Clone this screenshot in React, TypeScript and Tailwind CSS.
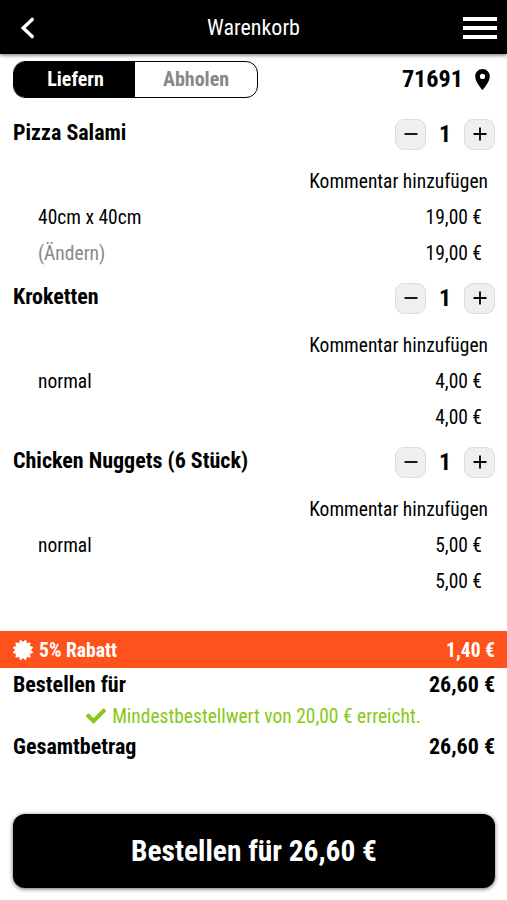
import { FaCheck, FaCertificate } from "react-icons/fa";
import { MdLocationOn } from "react-icons/md";

type CartItem = {
  name: string;
  option: string;
  editable?: boolean;
  price: string;
};

const items: CartItem[] = [
  { name: "Pizza Salami", option: "40cm x 40cm", editable: true, price: "19,00 €" },
  { name: "Kroketten", option: "normal", price: "4,00 €" },
  { name: "Chicken Nuggets (6 Stück)", option: "normal", price: "5,00 €" },
];

function Stepper() {
  return (
    <div className="flex items-center">
      <button className="flex size-[31px] items-center justify-center rounded-[9px] border border-[#dcdcdc] bg-[#efefef]">
        <svg width="14" height="14" viewBox="0 0 14 14" stroke="#000" strokeWidth="1.8">
          <path d="M0.5 7H13.5" />
        </svg>
      </button>
      <span className="w-[38px] text-center text-[24px] font-bold">1</span>
      <button className="flex size-[31px] items-center justify-center rounded-[9px] border border-[#dcdcdc] bg-[#efefef]">
        <svg width="14" height="14" viewBox="0 0 14 14" stroke="#000" strokeWidth="1.8">
          <path d="M0.5 7H13.5M7 0.5V13.5" />
        </svg>
      </button>
    </div>
  );
}

function Item({ item }: { item: CartItem }) {
  return (
    <div className="text-[19.5px]">
      <div className="mb-0.5 flex h-[54px] items-center justify-between pr-3 pl-[13px]">
        <h2 className="pb-[3px] text-[22px] font-bold">{item.name}</h2>
        <Stepper />
      </div>
      <div className="flex h-9 items-center justify-end pt-0.5 pr-[19px]">Kommentar hinzufügen</div>
      <div className="flex h-9 items-center justify-between pt-0.5 pr-[25px] pl-[38px]">
        <span>{item.option}</span>
        <span>{item.price}</span>
      </div>
      <div className="flex h-9 items-center justify-between pt-0.5 pr-[25px] pl-[38px]">
        <span className="text-[#888]">{item.editable && "(Ändern)"}</span>
        <span>{item.price}</span>
      </div>
    </div>
  );
}

export default function App() {
  return (
    <div className="flex h-[900px] w-[507px] flex-col overflow-hidden bg-white font-['Roboto_Condensed',Roboto,sans-serif] leading-none font-[440] text-black [font-stretch:75%]">
      <header className="grid h-[54px] shrink-0 grid-cols-[1fr_auto_1fr] items-center bg-black px-[10px] text-white shadow-[0_1px_4px_rgba(0,0,0,0.6)]">
        <svg className="mt-0.5 ml-[10px]" width="15" height="22" viewBox="0 0 15 22" fill="none" stroke="#fff" strokeWidth="3.4" strokeLinecap="round">
          <path d="M12.2 2.4L3.2 11L12.2 19.6" />
        </svg>
        <h1 className="pt-0.5 text-[22px]">Warenkorb</h1>
        <svg className="mt-0.5 justify-self-end" width="34" height="24" viewBox="0 0 34 24" fill="#fff">
          <path d="M0 1h34v4H0zM0 10h34v4H0zM0 19h34v4H0z" />
        </svg>
      </header>

      <div className="flex h-[53px] shrink-0 items-start justify-between pt-[7px] pr-3 pl-[13px]">
        <div className="flex h-[37px] w-[245px] overflow-hidden rounded-[12px] border border-black text-[20px] font-bold">
          <button className="w-[121px] bg-black pb-0.5 pl-0.5 text-white">Liefern</button>
          <button className="flex-1 pb-0.5 text-[#888]">Abholen</button>
        </div>
        <div className="flex h-[36px] items-center text-[24.2px] font-bold">
          71691
          <MdLocationOn className="ml-[7px] size-[25px]" />
        </div>
      </div>

      <main className="h-[524px] shrink-0">
        {items.map((item) => (
          <Item key={item.name} item={item} />
        ))}
      </main>

      <div className="flex h-[37px] shrink-0 items-center justify-between bg-[#ff511c] pr-3 pl-[13px] text-[19.6px] font-bold text-white">
        <span className="flex items-center gap-[6px]">
          <FaCertificate className="size-5" />
          <span className="pt-0.5">5% Rabatt</span>
        </span>
        <span className="pt-0.5">1,40 €</span>
      </div>

      <div className="flex h-[33px] shrink-0 items-center justify-between pr-3 pl-[13px] text-[22px] font-bold">
        <span>Bestellen für</span>
        <span>26,60 €</span>
      </div>
      <div className="flex h-[30px] shrink-0 items-center justify-center gap-[6px] text-[19.5px] text-[#87c914]">
        <FaCheck className="size-5" />
        <span className="pt-0.5">Mindestbestellwert von 20,00 € erreicht.</span>
      </div>
      <div className="flex h-[32px] shrink-0 items-center justify-between pr-3 pl-[13px] text-[22px] font-bold">
        <span>Gesamtbetrag</span>
        <span>26,60 €</span>
      </div>

      <div className="pt-[51px] pr-3 pl-[13px]">
        <button className="h-[74px] w-full rounded-[12px] bg-black pt-0.5 text-[29.4px] font-bold text-white shadow-[0_1px_4px_rgba(0,0,0,0.6)]">
          Bestellen für 26,60 €
        </button>
      </div>
    </div>
  );
}
